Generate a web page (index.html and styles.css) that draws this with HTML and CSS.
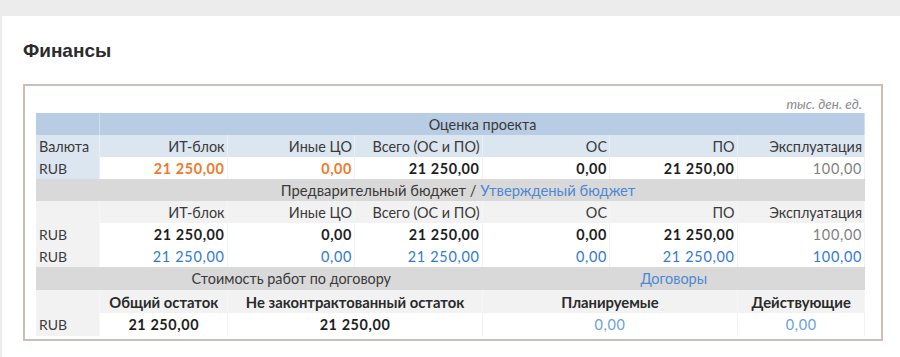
FILE: index.html
```html
<!DOCTYPE html>
<html lang="ru">
<head>
<meta charset="utf-8">
<title>Финансы</title>
<link rel="stylesheet" href="styles.css">
</head>
<body>
<div class="card">
  <h2 class="title">Финансы</h2>
  <div class="box">
    <div class="units">тыс. ден. ед.</div>
    <table class="fin">
      <colgroup><col class="c-cur"><col><col><col><col><col><col></colgroup>
      <tr class="row-blue">
        <td></td>
        <td colspan="6" class="center">Оценка проекта</td>
      </tr>
      <tr class="row-lblue">
        <td class="left">Валюта</td>
        <td>ИТ-блок</td><td>Иные ЦО</td><td>Всего (ОС и ПО)</td><td>ОС</td><td>ПО</td><td>Эксплуатация</td>
      </tr>
      <tr class="row-data">
        <td class="cur cur-blue">RUB</td>
        <td class="v orange">21 250,00</td><td class="v orange">0,00</td><td class="v">21 250,00</td><td class="v">0,00</td><td class="v">21 250,00</td><td class="n muted">100,00</td>
      </tr>
      <tr class="row-gray">
        <td colspan="7" class="center shift">Предварительный бюджет / <span class="link">Утвержденый бюджет</span></td>
      </tr>
      <tr class="row-lgray">
        <td></td>
        <td>ИТ-блок</td><td>Иные ЦО</td><td>Всего (ОС и ПО)</td><td>ОС</td><td>ПО</td><td>Эксплуатация</td>
      </tr>
      <tr class="row-data">
        <td class="cur">RUB</td>
        <td class="v">21 250,00</td><td class="v">0,00</td><td class="v">21 250,00</td><td class="v">0,00</td><td class="v">21 250,00</td><td class="n muted">100,00</td>
      </tr>
      <tr class="row-data">
        <td class="cur">RUB</td>
        <td class="n blue">21 250,00</td><td class="n blue">0,00</td><td class="n blue">21 250,00</td><td class="n blue">0,00</td><td class="n blue">21 250,00</td><td class="n blue">100,00</td>
      </tr>
      <tr class="row-gray tall">
        <td></td>
        <td colspan="3" class="center">Стоимость работ по договору</td>
        <td colspan="3" class="center"><span class="link">Договоры</span></td>
      </tr>
      <tr class="row-lgray tall">
        <td></td>
        <td class="center b">Общий остаток</td>
        <td colspan="2" class="center b">Не законтрактованный остаток</td>
        <td colspan="2" class="center b">Планируемые</td>
        <td class="center b">Действующие</td>
      </tr>
      <tr class="row-data tall">
        <td class="cur">RUB</td>
        <td class="center v">21 250,00</td>
        <td colspan="2" class="center v">21 250,00</td>
        <td colspan="2" class="center n lightblue">0,00</td>
        <td class="center n lightblue">0,00</td>
      </tr>
    </table>
  </div>
</div>
</body>
</html>
```
FILE: styles.css
```css
html, body {
  margin: 0;
  padding: 0;
}
body {
  background: #ececec;
  font-family: Lato, "Open Sans", sans-serif;
  height: 357px;
  overflow: hidden;
}
.card {
  background: #ffffff;
  margin: 16px 0 0 2px;
  padding: 24px 18px 0 21px;
  height: 341px;
  box-sizing: border-box;
}
.title {
  margin: 0 0 22px 0;
  font-family: "Liberation Sans", Arial, sans-serif;
  font-weight: bold;
  font-size: 19px;
  line-height: 22px;
  color: #2b2b2b;
}
.box {
  border: 2px solid #cbbfb7;
  width: 860px;
  box-sizing: border-box;
  padding: 9px 16px 3px 11px;
}
.units {
  text-align: right;
  font-style: italic;
  font-size: 13.5px;
  line-height: 18px;
  color: #8c8c8c;
  padding-right: 3px;
}
.fin {
  width: 829px;
  table-layout: fixed;
  border-collapse: separate;
  border-spacing: 0;
  font-size: 14.4px;
  color: #3a3a3a;
}
.c-cur { width: 64px; }
.fin td {
  height: 22px;
  padding: 0 2px 0 3px;
  text-align: right;
  white-space: nowrap;
  line-height: 21px;
  box-sizing: border-box;
  border-right: 1px solid rgba(255,255,255,0.35);
}
.fin tr.tall td { height: 23px; line-height: 22px; }
.fin td.left, .fin td.cur { text-align: left; }
.fin td.center { text-align: center; }
.fin td.shift { padding-left: 18px; font-size: 14.8px; }
.row-blue td { background: #b8cce4; }
.row-lblue td { background: #dce6f1; }
.row-gray td { background: #d9d9d9; border-right-color: #d9d9d9; }
.row-lgray td { background: #f2f2f2; }
.row-data td { background: #ffffff; border-right-color: #f2f2f2; }
.row-data td.cur { background: #f2f2f2; border-right-color: rgba(255,255,255,0.35); }
.row-data td.cur-blue { background: #dce6f1; }
.fin td.cur { font-size: 14px; }
.v { font-weight: bold; color: #1e1e1e; letter-spacing: 0.6px; }
.n { letter-spacing: 0.7px; }
.fin td.b { font-weight: bold; color: #2a2a2a; font-size: 14.8px; }
.orange { color: #ee7a2c; }
.muted { color: #7f7f7f; }
.blue { color: #2f7ad6; }
.lightblue { color: #6d9fe0; }
.link { color: #4d88d4; }
```
